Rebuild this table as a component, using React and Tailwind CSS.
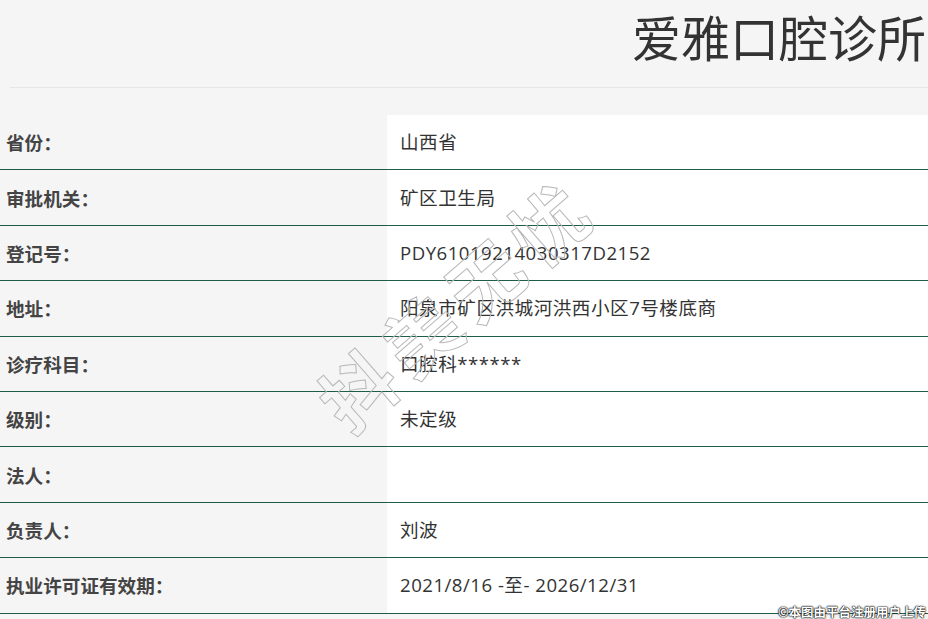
import React from 'react';

const rows = [
  { label: '省份：', value: '山西省' },
  { label: '审批机关：', value: '矿区卫生局' },
  { label: '登记号：', value: 'PDY61019214030317D2152' },
  { label: '地址：', value: '阳泉市矿区洪城河洪西小区7号楼底商' },
  { label: '诊疗科目：', value: '口腔科******' },
  { label: '级别：', value: '未定级' },
  { label: '法人：', value: '' },
  { label: '负责人：', value: '刘波' },
  { label: '执业许可证有效期：', value: '2021/8/16 -至- 2026/12/31' },
];

const App = () => {
  return (
    <div className="relative w-[928px] h-[619px] overflow-hidden bg-[#f5f5f5] font-['Open_Sans','Noto_Sans_CJK_SC',sans-serif]">
      <div className="h-[87px] flex justify-end pt-[11px] pr-[2px]">
        <h1 className="text-[49px] leading-none text-[#333] font-['Noto_Sans_CJK_SC',sans-serif] whitespace-nowrap">
          爱雅口腔诊所
        </h1>
      </div>
      <div className="ml-[10px] border-t border-[#e6e6e6]" />

      <div className="mt-[27px]">
        {rows.map((r) => (
          <div key={r.label} className="flex h-[55.4px] border-b border-[#1e5d48]">
            <div className="w-[387px] bg-[#f5f5f5] pl-[6px] flex items-center text-[18.6px] font-bold text-[#444] font-['Noto_Sans_CJK_SC',sans-serif]">
              {r.label}
            </div>
            <div className="flex-1 bg-white pl-[13px] flex items-center text-[18.6px] tracking-[0.5px] text-[#333]">
              {r.value}
            </div>
          </div>
        ))}
      </div>

      {/* watermark */}
      <div className="absolute left-[455px] top-[302px] -translate-x-1/2 -translate-y-1/2 rotate-[-41deg] whitespace-nowrap text-[74px] leading-none tracking-[10px] font-bold text-transparent font-['Noto_Sans_CJK_SC',sans-serif] [-webkit-text-stroke:1px_#b8b8b8] pointer-events-none">
        抖美无忧
      </div>

      <div className="absolute right-[2px] bottom-[1px] text-[12.5px] leading-none font-bold text-white font-['Noto_Sans_CJK_SC',sans-serif] [text-shadow:0_0_1px_#000,0_0_1px_#000,0_0_2px_#000]">
        ©本图由平台注册用户上传
      </div>
    </div>
  );
};

export default App;
